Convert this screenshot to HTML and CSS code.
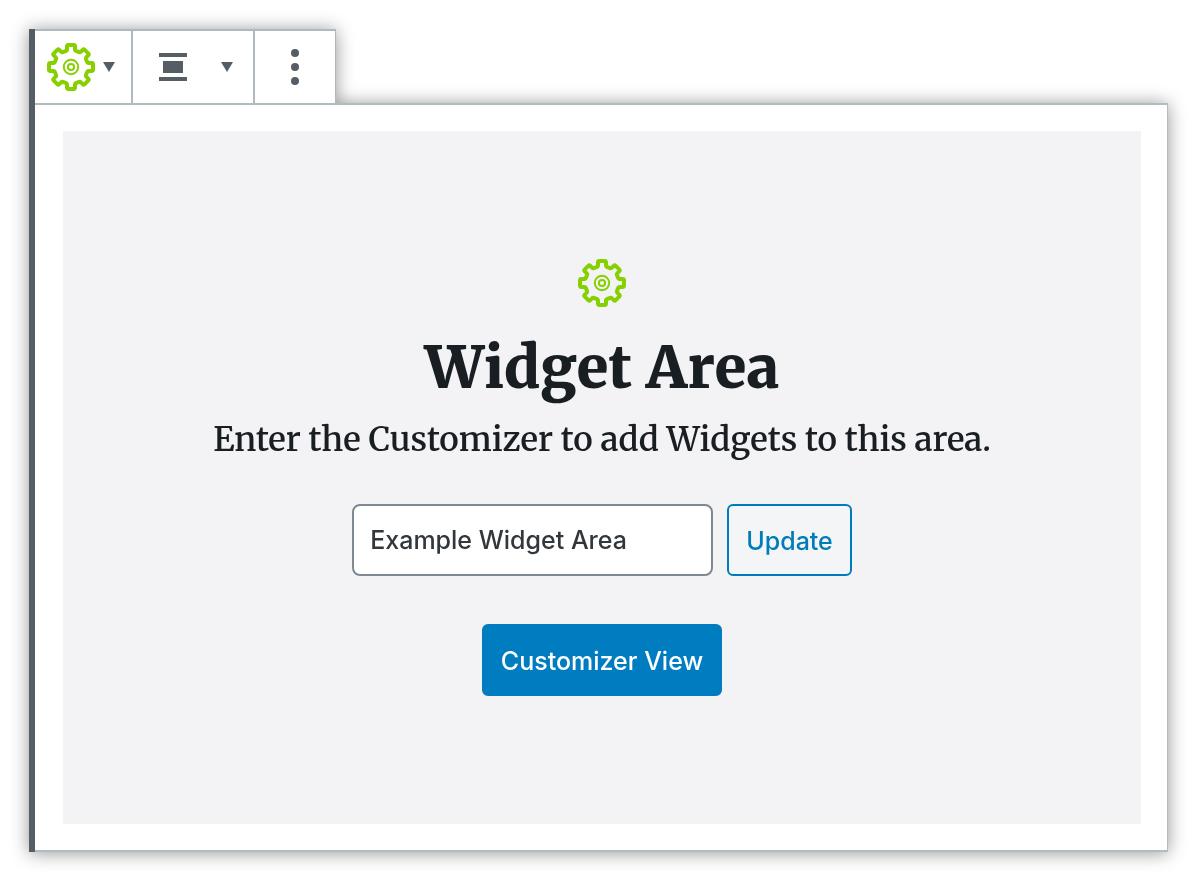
FILE: index.html
```html
<!DOCTYPE html>
<html lang="en">
<head>
<meta charset="utf-8">
<meta name="viewport" content="width=device-width, initial-scale=1">
<title>Widget Area</title>
<link rel="stylesheet" href="styles.css">
</head>
<body>
<svg class="sprite" aria-hidden="true">
  <symbol id="gear" viewBox="-24 -24 48 48">
    <path fill="none" stroke="currentColor" stroke-width="4" stroke-linejoin="round" d="M-2.6-22H2.6Q4-22 4-20.6V-17.6Q4-16.6 4.9-16.2L8.1-14.9Q9-14.5 9.7-15.2L11.7-17.2Q12.7-18.2 13.7-17.2L17.2-13.7Q18.2-12.7 17.2-11.7L15.2-9.7Q14.5-9 14.9-8.1L16.2-4.9Q16.6-4 17.6-4H20.6Q22-4 22-2.6V2.6Q22 4 20.6 4H17.6Q16.6 4 16.2 4.9L14.9 8.1Q14.5 9 15.2 9.7L17.2 11.7Q18.2 12.7 17.2 13.7L13.7 17.2Q12.7 18.2 11.7 17.2L9.7 15.2Q9 14.5 8.1 14.9L4.9 16.2Q4 16.6 4 17.6V20.6Q4 22 2.6 22H-2.6Q-4 22-4 20.6V17.6Q-4 16.6-4.9 16.2L-8.1 14.9Q-9 14.5-9.7 15.2L-11.7 17.2Q-12.7 18.2-13.7 17.2L-17.2 13.7Q-18.2 12.7-17.2 11.7L-15.2 9.7Q-14.5 9-14.9 8.1L-16.2 4.9Q-16.6 4-17.6 4H-20.6Q-22 4-22 2.6V-2.6Q-22-4-20.6-4H-17.6Q-16.6-4-16.2-4.9L-14.9-8.1Q-14.5-9-15.2-9.7L-17.2-11.7Q-18.2-12.7-17.2-13.7L-13.7-17.2Q-12.7-18.2-11.7-17.2L-9.7-15.2Q-9-14.5-8.1-14.9L-4.9-16.2Q-4-16.6-4-17.6V-20.6Q-4-22-2.6-22Z"/>
    <circle r="7.2" fill="none" stroke="currentColor" stroke-width="2"/>
    <circle r="3.1" fill="none" stroke="currentColor" stroke-width="2"/>
  </symbol>
</svg>
<main class="block">
  <div class="toolbar" role="toolbar" aria-label="Block tools">
    <button class="tool tool-type" aria-label="Change block type">
      <svg class="gear" aria-hidden="true"><use href="#gear"/></svg>
      <svg class="caret" viewBox="0 0 12 10" aria-hidden="true"><path d="M0 0H12L6 10Z"/></svg>
    </button>
    <button class="tool tool-align" aria-label="Change alignment">
      <svg class="align" viewBox="0 0 28 28" aria-hidden="true"><path d="M0 0H28V4H0ZM4 8H24V20H4ZM0 24H28V28H0Z"/></svg>
      <svg class="caret" viewBox="0 0 12 10" aria-hidden="true"><path d="M0 0H12L6 10Z"/></svg>
    </button>
    <button class="tool tool-more" aria-label="More options">
      <svg class="dots" viewBox="0 0 8 36" aria-hidden="true"><circle cx="4" cy="4" r="4"/><circle cx="4" cy="18" r="4"/><circle cx="4" cy="32" r="4"/></svg>
    </button>
  </div>
  <section class="panel">
    <div class="placeholder">
      <svg class="gear" aria-hidden="true"><use href="#gear"/></svg>
      <h1 class="title">Widget Area</h1>
      <p class="intro">Enter the Customizer to add Widgets to this area.</p>
      <form class="form">
        <input class="name" type="text" value="Example Widget Area" aria-label="Widget area name">
        <button class="button button-outline" type="button">Update</button>
      </form>
      <button class="button button-primary" type="button">Customizer View</button>
    </div>
  </section>
</main>
</body>
</html>
```
FILE: styles.css
```css
* {
  box-sizing: border-box;
}

body {
  margin: 0;
  background: #fff;
  color: #191e23;
  font-family: Inter, "Liberation Sans", sans-serif;
}

.sprite {
  position: absolute;
  width: 0;
  height: 0;
}

.block {
  margin: 29px 32px 28px 29px;
  border-left: 6px solid #555d66;
  filter: drop-shadow(0 1px 9px rgba(0, 0, 0, 0.42));
}

.toolbar {
  display: flex;
  width: fit-content;
  height: 74px;
  background: #fff;
  border-top: 2px solid #b0b9c0;
  border-right: 1px solid #b0b9c0;
}

.tool {
  display: flex;
  align-items: center;
  padding: 0;
  border: 0;
  background: none;
  color: #555d66;
  fill: currentColor;
}

.tool + .tool {
  border-left: 2px solid #b0b9c0;
}

.tool-type {
  gap: 8px;
  padding: 0 16px 0 12px;
}

.tool-align {
  gap: 34px;
  padding: 0 20px 0 26px;
}

.tool-more {
  padding: 0 36px;
}

.gear {
  width: 48px;
  height: 48px;
  color: #87d000;
}

.caret {
  width: 12px;
  height: 10px;
}

.align {
  width: 28px;
  height: 28px;
}

.dots {
  width: 8px;
  height: 36px;
}

.panel {
  padding: 26px 26px 26px 28px;
  background: #fff;
  border: solid #b0bcc0;
  border-width: 2px 1px 2px 0;
}

.placeholder {
  display: flex;
  flex-direction: column;
  align-items: center;
  padding: 128px 24px;
  background: #f3f3f5;
}

.title,
.intro {
  margin: 0;
  font-family: Merriweather, "DejaVu Serif Condensed", "DejaVu Serif", serif;
  text-align: center;
}

.title {
  margin-top: 21px;
  font-size: 58px;
  font-weight: 900;
  line-height: 80px;
}

.intro {
  margin-top: 8px;
  font-size: 33px;
  font-weight: 600;
  line-height: 48px;
}

.form {
  display: flex;
  flex-wrap: wrap;
  gap: 14px;
  margin: 40px 0 48px;
}

.name,
.button {
  height: 72px;
  border: 2px solid;
  border-radius: 6px;
  font: 500 25px Inter, "Liberation Sans", sans-serif;
}

.name {
  width: 361px;
  padding: 0 16px;
  border-color: #7e8993;
  border-radius: 8px;
  background: #fff;
  color: #32373c;
}

.button {
  padding: 2px 17px 0;
}

.button-outline {
  border-color: #007cba;
  background: #f3f5f6;
  color: #007cba;
}

.button-primary {
  border-color: #007cc0;
  background: #007cc0;
  color: #fff;
}
```
